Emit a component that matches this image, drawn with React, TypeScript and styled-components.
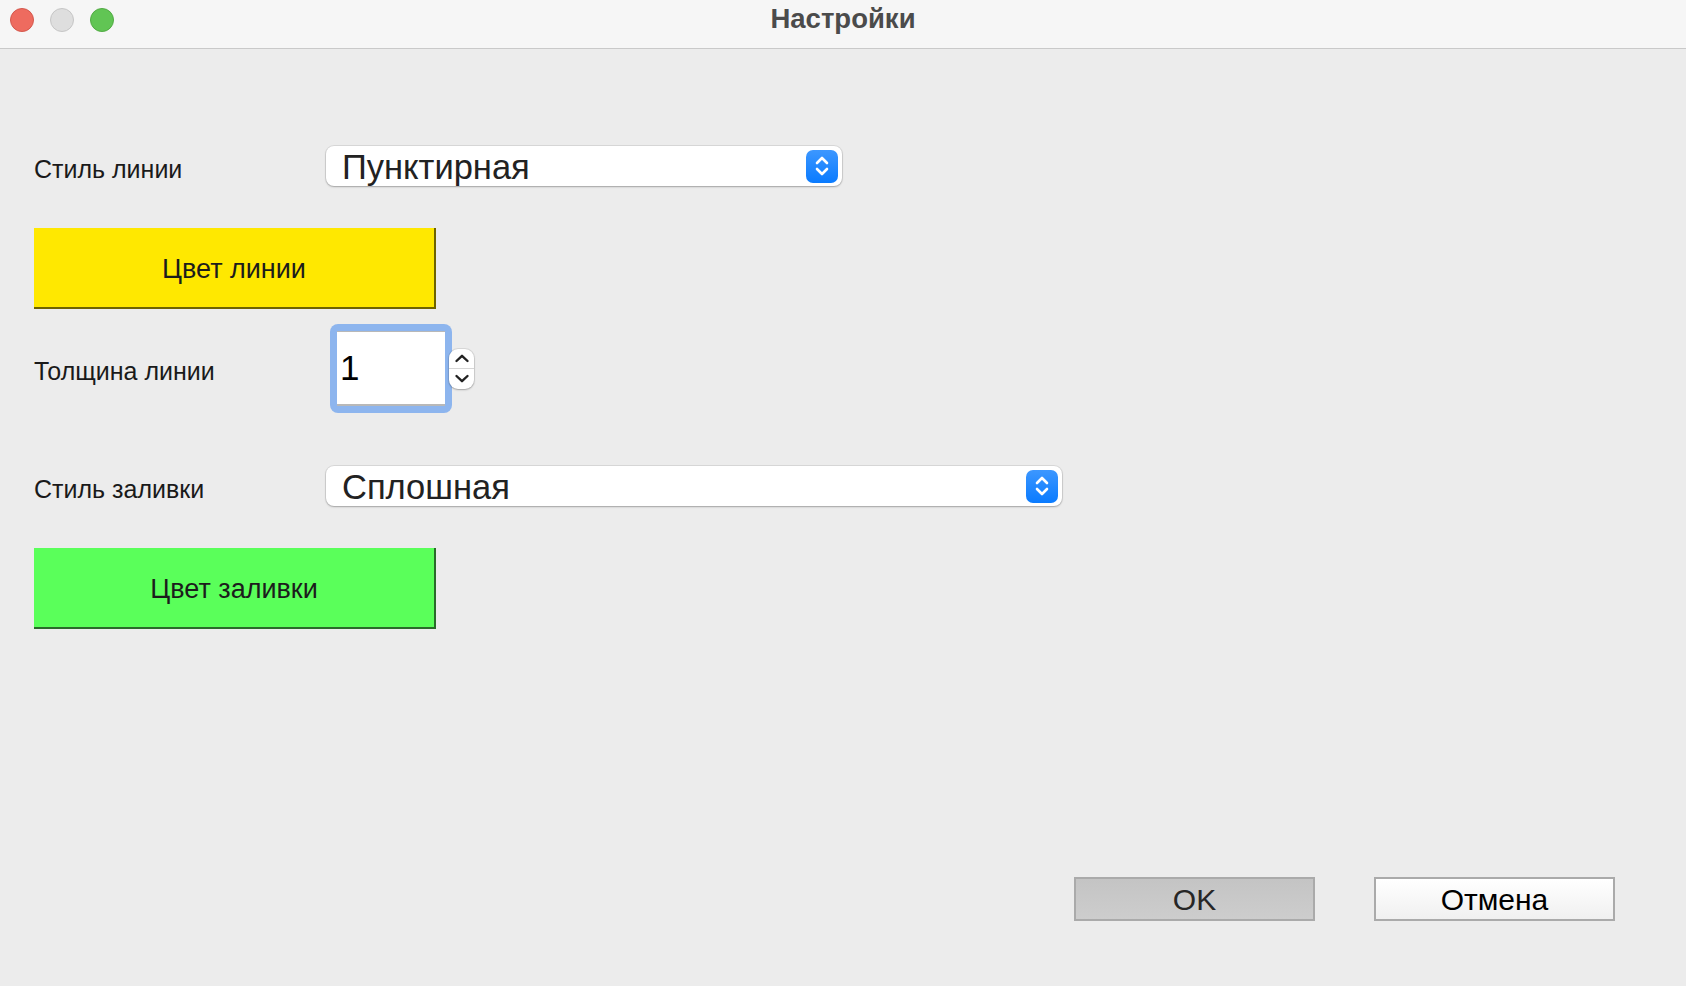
import React from "react";
import styled, { createGlobalStyle } from "styled-components";

const Global = createGlobalStyle`
  html, body { margin: 0; padding: 0; background: #ececec; }
  body { font-family: "Liberation Sans", Arial, Helvetica, sans-serif; }
  #root { width: 1686px; height: 986px; }
`;

const Window = styled.div`
  width: 1686px;
  height: 986px;
  display: flex;
  flex-direction: column;
  background: #ececec;
  overflow: hidden;
`;

const TitleBar = styled.div`
  height: 48px;
  flex: none;
  background: #f6f6f6;
  border-bottom: 1px solid #c9c9c9;
  position: relative;
  display: flex;
  align-items: center;
  justify-content: center;
`;

const Lights = styled.div`
  position: absolute;
  left: 10px;
  top: 8px;
  display: flex;
  gap: 16px;
`;

const Light = styled.span<{ $bg: string; $bd: string }>`
  width: 24px;
  height: 24px;
  border-radius: 50%;
  background: ${(p) => p.$bg};
  border: 1px solid ${(p) => p.$bd};
  box-sizing: border-box;
`;

const Title = styled.div`
  font-size: 27.5px;
  font-weight: bold;
  color: #4b4b4b;
  margin-top: -10px;
`;

const Content = styled.div`
  flex: 1;
  display: flex;
  flex-direction: column;
  padding: 97px 0 0 34px;
`;

const Row = styled.div<{ $h: number; $mt?: number }>`
  display: flex;
  align-items: center;
  height: ${(p) => p.$h}px;
  margin-top: ${(p) => p.$mt ?? 0}px;
`;

const Label = styled.div`
  width: 292px;
  flex: none;
  font-size: 25px;
  color: #1a1a1a;
  padding-top: 6px;
`;

const Select = styled.div<{ $w: number }>`
  width: ${(p) => p.$w}px;
  height: 40px;
  box-sizing: border-box;
  background: #fff;
  border-radius: 8px;
  box-shadow: 0 0 0 1px rgba(0,0,0,0.08), 0 1px 2px rgba(0,0,0,0.25);
  display: flex;
  align-items: center;
  justify-content: space-between;
  padding: 0 4px 0 16px;
`;

const SelectText = styled.span`
  font-size: 34.5px;
  color: #222;
  line-height: 40px;
  padding-top: 2px;
`;

const BlueStepper = styled.span`
  width: 32px;
  height: 33px;
  border-radius: 7px;
  background: linear-gradient(#3c97ff, #0a7bff);
  display: flex;
  align-items: center;
  justify-content: center;
`;

const ColorButton = styled.div<{ $bg: string; $edge: string; $mt: number }>`
  width: 402px;
  height: 81px;
  box-sizing: border-box;
  margin-top: ${(p) => p.$mt}px;
  background: ${(p) => p.$bg};
  border-right: 2px solid ${(p) => p.$edge};
  border-bottom: 2px solid ${(p) => p.$edge};
  display: flex;
  align-items: center;
  justify-content: center;
  font-size: 27px;
  color: #1c1c1c;
  padding-top: 4px;
`;

const SpinWrap = styled.div`
  display: flex;
  align-items: center;
  margin-left: 4px;
`;

const SpinRing = styled.div`
  width: 122px;
  height: 89px;
  box-sizing: border-box;
  border-radius: 8px;
  background: #8db5ee;
  padding: 7px;
  display: flex;
`;

const SpinInput = styled.div`
  flex: 1;
  background: #fff;
  border-top: 1px solid #b8b8b8;
  border-bottom: 2px solid #b8b8b8;
  display: flex;
  align-items: center;
  padding-left: 3px;
  font-size: 35px;
  color: #000;
`;

const Arrows = styled.div`
  width: 25px;
  height: 40px;
  margin-left: -3px;
  background: #fff;
  border-radius: 9px;
  box-shadow: 0 0 0 1px rgba(0,0,0,0.08), 0 1px 2px rgba(0,0,0,0.25);
  display: flex;
  flex-direction: column;
  overflow: hidden;
`;

const ArrowHalf = styled.div<{ $top?: boolean }>`
  flex: 1;
  display: flex;
  align-items: center;
  justify-content: center;
  border-bottom: ${(p) => (p.$top ? "1px solid #d6d6d6" : "none")};
`;

const Footer = styled.div`
  margin-top: auto;
  margin-bottom: 65px;
  display: flex;
  justify-content: flex-end;
  gap: 59px;
  padding-right: 71px;
`;

const DialogButton = styled.div<{ $default?: boolean }>`
  width: 241px;
  height: 44px;
  box-sizing: border-box;
  border: 2px solid #aaaaaa;
  background: ${(p) =>
    p.$default
      ? "linear-gradient(#c4c4c4, #cdcdcd)"
      : "linear-gradient(#ffffff, #f0f0f0)"};
  display: flex;
  align-items: center;
  justify-content: center;
  font-size: 30px;
  color: ${(p) => (p.$default ? "#262626" : "#000")};
  padding-top: 2px;
`;

const Chevrons = ({ color }: { color: string }) => (
  <svg width="18" height="26" viewBox="0 0 18 26" fill="none">
    <path d="M4 10 L9 5 L14 10" stroke={color} strokeWidth="2.6" strokeLinecap="round" strokeLinejoin="round" />
    <path d="M4 16 L9 21 L14 16" stroke={color} strokeWidth="2.6" strokeLinecap="round" strokeLinejoin="round" />
  </svg>
);

const Chevron = ({ up }: { up?: boolean }) => (
  <svg width="16" height="11" viewBox="0 0 16 11" fill="none">
    <path
      d={up ? "M2.5 8 L8 2.8 L13.5 8" : "M2.5 3 L8 8.2 L13.5 3"}
      stroke="#222"
      strokeWidth="2.4"
      strokeLinecap="round"
      strokeLinejoin="round"
    />
  </svg>
);

export default function App() {
  return (
    <>
      <Global />
      <Window>
        <TitleBar>
          <Lights>
            <Light $bg="#ee6b5f" $bd="#d4584d" />
            <Light $bg="#dedede" $bd="#c6c6c6" />
            <Light $bg="#61c554" $bd="#52ab44" />
          </Lights>
          <Title>Настройки</Title>
        </TitleBar>
        <Content>
          <Row $h={40}>
            <Label>Стиль линии</Label>
            <Select $w={516}>
              <SelectText>Пунктирная</SelectText>
              <BlueStepper>
                <Chevrons color="#fff" />
              </BlueStepper>
            </Select>
          </Row>
          <ColorButton $bg="#ffe800" $edge="#6e6300" $mt={42}>
            Цвет линии
          </ColorButton>
          <Row $h={89} $mt={15}>
            <Label>Толщина линии</Label>
            <SpinWrap>
              <SpinRing>
                <SpinInput>1</SpinInput>
              </SpinRing>
              <Arrows>
                <ArrowHalf $top>
                  <Chevron up />
                </ArrowHalf>
                <ArrowHalf>
                  <Chevron />
                </ArrowHalf>
              </Arrows>
            </SpinWrap>
          </Row>
          <Row $h={40} $mt={53}>
            <Label>Стиль заливки</Label>
            <Select $w={736}>
              <SelectText>Сплошная</SelectText>
              <BlueStepper>
                <Chevrons color="#fff" />
              </BlueStepper>
            </Select>
          </Row>
          <ColorButton $bg="#5aff5a" $edge="#2a6a2a" $mt={42}>
            Цвет заливки
          </ColorButton>
          <Footer>
            <DialogButton $default>OK</DialogButton>
            <DialogButton>Отмена</DialogButton>
          </Footer>
        </Content>
      </Window>
    </>
  );
}
